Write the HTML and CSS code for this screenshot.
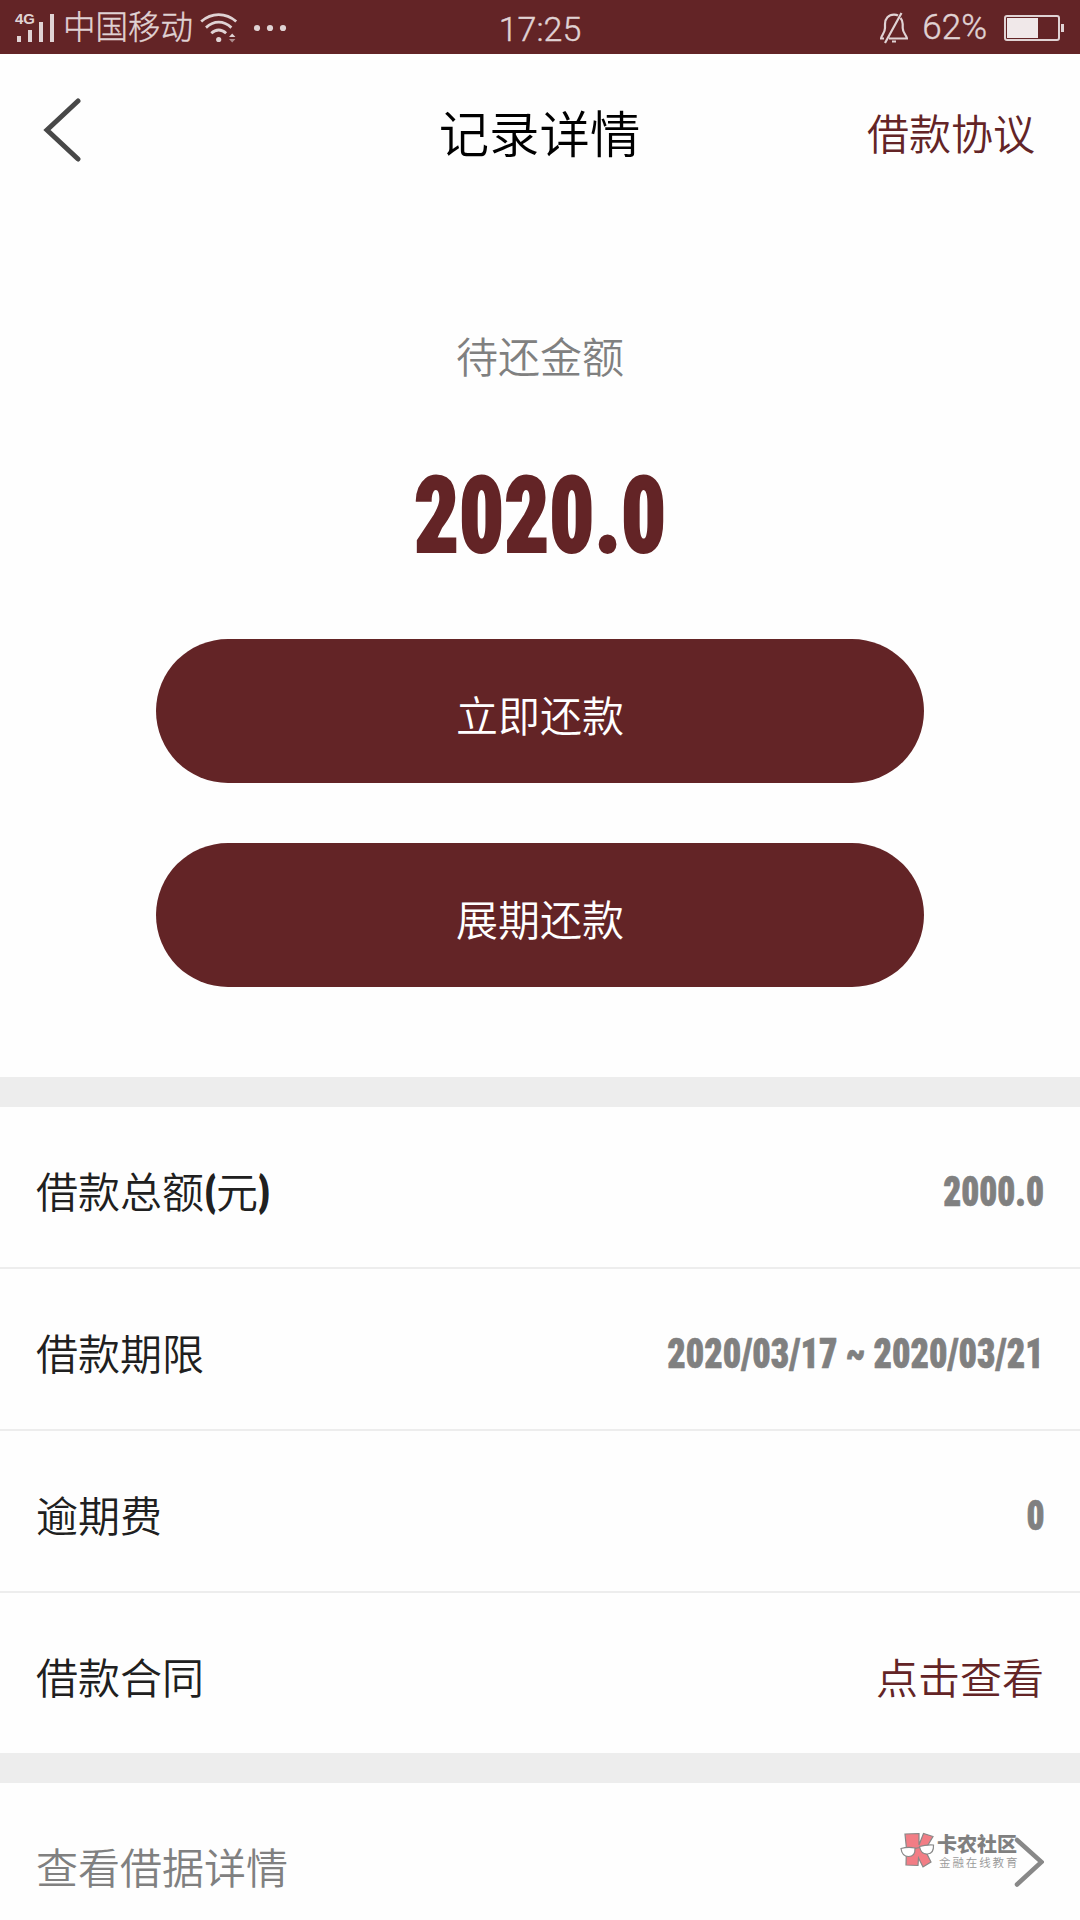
FILE: index.html
```html
<!DOCTYPE html>
<html lang="zh-CN">
<head>
<meta charset="UTF-8">
<meta name="viewport" content="width=device-width, initial-scale=1.0">
<title>记录详情</title>
<link rel="stylesheet" href="styles.css">
</head>
<body>
<div class="wrap">
    <div class="status">
        <div class="status_left">
            <svg class="signal" width="40" height="30" viewBox="0 0 40 30">
                <text x="-1" y="11" class="net">4G</text>
                <rect x="1" y="23" width="4" height="6"/>
                <rect x="12" y="17" width="4" height="12"/>
                <rect x="23" y="9" width="4" height="20"/>
                <rect x="34" y="1" width="4" height="28"/>
            </svg>
            <span class="carrier">中国移动</span>
            <svg class="wifi" width="38" height="30" viewBox="0 0 38 30">
                <g class="line">
                    <path d="M1.2 8.5Q9 1.6 18.7 1.6T36.2 8.5"/>
                    <path d="M6 14.6Q12 9.2 18.7 9.2T31.4 14.6"/>
                    <path d="M11.3 20.2Q14.8 17 18.7 17T26.1 20.2"/>
                </g>
                <circle cx="18.7" cy="26.5" r="2.6"/>
                <path d="M29 24l3.2-3.4 3.2 3.4z"/>
                <path d="M29 26h6.4l-3.2 3.4z" opacity=".6"/>
            </svg>
            <svg class="dots" width="34" height="8" viewBox="0 0 34 8">
                <circle cx="4" cy="4" r="3.1"/>
                <circle cx="17" cy="4" r="3.1"/>
                <circle cx="30" cy="4" r="3.1"/>
            </svg>
        </div>
        <div class="time">17:25</div>
        <div class="status_right">
            <svg class="bell" width="28" height="32" viewBox="0 0 28 32">
                <path class="line" d="M18 3.5Q16.5 2.6 14 2.6C8.5 2.6 5 6.5 5 12V16C5 21 1.5 23 1 26.5H4M20.5 6Q22.7 8.5 22.7 12V16C22.7 21 26.5 23 27 26.5H9M21.5 1L5 31"/>
                <rect x="12" y="28.5" width="4" height="2"/>
            </svg>
            <span class="percent">62%</span>
            <svg class="battery" width="60" height="26" viewBox="0 0 60 26">
                <rect class="case" x="1" y="1" width="54" height="24" rx="2"/>
                <rect class="level" x="3" y="3" width="31" height="20"/>
                <rect x="57" y="9" width="3" height="8"/>
            </svg>
        </div>
    </div>

    <div class="header">
        <a href="#" class="back">
            <svg width="40" height="64" viewBox="0 0 40 64">
                <path d="M35 3L4 32L35 61"/>
            </svg>
        </a>
        <h1>记录详情</h1>
        <a href="#" class="agreement">借款协议</a>
    </div>

    <div class="amount">
        <p class="amount_label">待还金额</p>
        <p class="amount_num"><span class="num">2020.0</span></p>
        <a href="#" class="btn">立即还款</a>
        <a href="#" class="btn">展期还款</a>
    </div>

    <ul class="list">
        <li><span>借款总额<i class="paren">(</i>元<i class="paren">)</i></span><span class="num">2000.0</span></li>
        <li><span>借款期限</span><span class="num date">2020/03/17 ~ 2020/03/21</span></li>
        <li><span>逾期费</span><span class="num">0</span></li>
        <li><span>借款合同</span><a href="#" class="view">点击查看</a></li>
    </ul>

    <div class="detail">
        <span>查看借据详情</span>
        <svg class="arrow" width="32" height="50" viewBox="0 0 32 50">
            <path d="M5 3L29.5 25L5 47.5"/>
        </svg>
        <div class="mark">
            <svg width="36" height="38" viewBox="0 0 36 38">
                <path class="k" d="M5 2L19 1.500L19 13L23.500 1.500L33 4.500L25 18L31 30L23 35L18.500 26L18 33.500L6 33L6.500 17z"/>
                <path class="glass" d="M1 16.500Q8 14.500 15 16Q15.500 24.500 8.500 24.500Q2 24.500 1 16.500zM19.500 14.500Q26 12.500 33.500 13Q34 21.500 27.500 22Q21 22.500 19.500 14.500zM15 16.500L19.500 15.500"/>
            </svg>
            <div class="mark_text">
                <b>卡农社区</b>
                <small>金融在线教育</small>
            </div>
        </div>
    </div>
</div>
</body>
</html>
```
FILE: styles.css
```css
* {margin: 0; padding: 0; box-sizing: border-box;}
li {list-style: none;}
a {color: inherit; text-decoration: none;}
svg {display: block;}
body {
    background: #fefefe;
    font-family: "Noto Sans CJK SC", sans-serif;
    font-size: 42px;
    font-weight: 350;
    color: #202020;
}
.wrap {
    width: 1080px;
    height: 1920px;
    overflow: hidden;
}

/* 状态栏 */
.status {
    display: grid;
    grid-template-columns: 1fr auto 1fr;
    align-items: center;
    height: 54px;
    padding: 0 16px;
    background: #632426;
    color: #e0d3d4;
    fill: #e0d3d4;
}
.status .line {
    fill: none;
    stroke: #e0d3d4;
    stroke-width: 2.2;
}
.status .wifi .line {stroke-width: 2.8;}
.status_left, .status_right {
    display: flex;
    align-items: center;
    height: 54px;
}
.status_right {
    justify-content: flex-end;
    padding: 0 0 1px;
}
.signal, .wifi {margin-bottom: 1px;}
.signal {overflow: visible;}
.net {
    font: 700 15px "Liberation Sans", sans-serif;
}
.carrier {
    margin: 0 7px 0 7px;
    font-size: 32.5px;
    line-height: 48px;
    padding-bottom: 6px;
    font-weight: 300;
    -webkit-text-stroke: .4px #e0d3d4;
}
.dots {
    margin-left: 15px;
    margin-bottom: 1px;
}
.time, .percent {
    font-family: Roboto, sans-serif;
    font-weight: 300;
    font-size: 35px;
    line-height: 54px;
    -webkit-text-stroke: .4px #e0d3d4;
}
.time {
    padding-top: 2px;
    font-size: 34px;
}
.percent {margin: 0 17px 0 14px;}
.battery .case {
    fill: none;
    stroke: #e0d3d4;
    stroke-width: 2;
}
.battery .level {fill: #f0e8e9;}

/* 标题 */
.header {
    display: grid;
    grid-template-columns: 1fr auto 1fr;
    align-items: center;
    height: 152px;
    padding: 2px 45px 0 43px;
}
.header h1 {
    padding-left: 1px;
    font-size: 50.4px;
    font-weight: 350;
    color: #000;
}
.back svg {margin-bottom: 2px;}
.back path {
    fill: none;
    stroke: #484848;
    stroke-width: 5;
    stroke-linecap: round;
}
.agreement {
    justify-self: end;
    padding-top: 1px;
    color: #632426;
}

/* 待还金额 */
.amount {
    height: 871px;
    padding-top: 118px;
    text-align: center;
}
.amount_label {
    line-height: 62px;
    color: #808080;
}
.amount_num {
    height: 253px;
    padding-top: 57px;
    line-height: 126px;
    font-size: 105px;
}
.num {
    display: inline-block;
    font-family: Roboto, sans-serif;
    font-weight: 900;
    font-stretch: 75%;
    transform: scaleX(.84);
    color: #808080;
    -webkit-text-stroke: .7px;
}
.amount_num .num {
    color: #632426;
    -webkit-text-stroke: 2px;
}
.btn {
    display: block;
    width: 768px;
    height: 144px;
    margin: 0 auto 60px;
    border-radius: 72px;
    line-height: 150px;
    background: #632426;
    color: #fff;
}

/* 借款信息 */
.list {
    border-top: 30px solid #ededed;
    border-bottom: 30px solid #ededed;
}
.list li {
    display: flex;
    justify-content: space-between;
    height: 162px;
    padding: 0 36px;
    border-bottom: 2px solid #ededed;
    line-height: 166px;
}
.list li:last-child {
    height: 160px;
    border-bottom: 0;
}
.list .num {
    line-height: 169px;
    transform-origin: right;
}
.list .date {transform: scaleX(.86);}
.list .view {color: #632426;}
.paren {
    display: inline-block;
    width: 12px;
    font-family: Roboto, sans-serif;
    font-size: 38px;
    font-style: normal;
    font-weight: 900;
    font-stretch: 75%;
    line-height: 1;
    transform: translateY(-3px) scaleX(.8);
    -webkit-text-stroke: 2px;
}

/* 借据详情 */
.detail {
    position: relative;
    display: flex;
    justify-content: space-between;
    height: 162px;
    padding: 0 36px;
    line-height: 166px;
    color: #808080;
}
.arrow {margin-top: 54px;}
.arrow path {
    fill: none;
    stroke: #888;
    stroke-width: 4.5;
    stroke-linecap: round;
}
.mark {
    position: absolute;
    left: 900px;
    top: 49px;
    display: flex;
}
.mark .k {
    fill: #f27d85;
    stroke: #888;
    stroke-width: 1.2;
}
.mark .glass {
    fill: #fff;
    stroke: #888;
    stroke-width: 1.2;
}
.mark_text b {
    display: block;
    font-size: 20px;
    font-weight: 900;
    line-height: 23px;
    margin-left: 1px;
}
.mark_text small {
    display: block;
    padding-left: 3px;
    font-size: 11.5px;
    line-height: 14px;
    letter-spacing: 1.9px;
    color: #999;
}
```
